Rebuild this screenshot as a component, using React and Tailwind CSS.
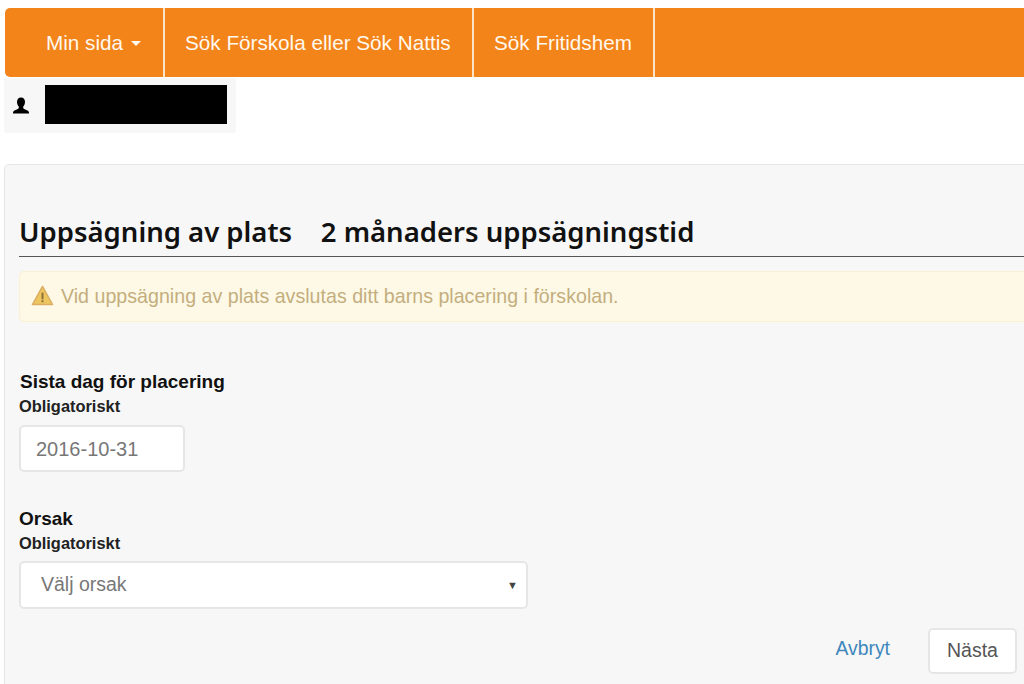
function NavItem({ children, className = "" }) {
  return (
    <a className={"flex h-full items-center border-r-2 border-[#fbe3c8] text-[20.7px] text-[#fff8ee] " + className}>
      {children}
    </a>
  );
}

function FieldLabel({ title, className = "" }) {
  return (
    <div>
      <div className={"h-[24px] text-[19px] font-bold leading-[24px] text-[#111] " + className}>{title}</div>
      <div className="h-[24px] text-[16.4px] font-bold leading-[24px] text-[#222]">Obligatoriskt</div>
    </div>
  );
}

export default function App() {
  return (
    <div className="h-[684px] w-[1024px] overflow-hidden bg-white font-['Liberation_Sans',sans-serif]">
      {/* top nav */}
      <nav className="ml-[5px] mt-[8px] flex h-[69px] w-[1100px] rounded-l-[5px] bg-[#f2841a]">
        <NavItem className="w-[160px] pl-[41px]">
          Min sida
          <span className="ml-[8px] mt-[2px] h-0 w-0 border-x-[5px] border-t-[5px] border-x-transparent border-t-[#fff8ee]" />
        </NavItem>
        <NavItem className="w-[309px] pl-[20px]">Sök Förskola eller Sök Nattis</NavItem>
        <NavItem className="w-[181px] pl-[20px]">Sök Fritidshem</NavItem>
      </nav>

      {/* user */}
      <div className="ml-[4px] mt-[1px] flex h-[55px] w-[232px] items-center rounded-b-[3px] bg-[#f7f7f7]">
        <svg viewBox="0 0 20 20" className="ml-[7px] h-[20px] w-[20px] text-black" fill="currentColor">
          <path d="M10 1.5c-2.6 0-4 2-4 4.6 0 1.8.7 3.5 1.8 4.5v1.2c0 .8-.9 1.2-2.6 1.9-1.6.6-3 1.2-3.2 2.8v1h16v-1c-.2-1.6-1.6-2.2-3.2-2.8-1.7-.7-2.6-1.1-2.6-1.9v-1.2c1.1-1 1.8-2.7 1.8-4.5 0-2.6-1.4-4.6-4-4.6z" />
        </svg>
        <div className="ml-[14px] mb-[3px] h-[39px] w-[182px] bg-black" />
      </div>

      {/* panel */}
      <main className="ml-[4px] mt-[31px] h-[540px] w-[1100px] rounded-tl-[5px] border border-[#e6e6e6] bg-[#f7f7f7] pl-[14px] pt-[47px]">
        <h1 className="h-[45px] w-[1100px] whitespace-pre border-b border-[#555] text-[27.5px] font-semibold leading-[40px] text-[#111] font-['Noto_Sans',sans-serif]">
          Uppsägning av plats    2 månaders uppsägningstid
        </h1>

        <div className="mt-[14px] flex h-[51px] w-[1100px] items-center rounded-[5px] border border-[#faf0d2] bg-[#fdf9e6] pl-[11px] text-[19.65px] text-[#c4ae7e]">
          <svg viewBox="0 0 24 22" className="mb-[2px] h-[21px] w-[23px]">
            <path d="M12 1.5 1.5 20.5h21z" fill="#ecc65f" stroke="#dcae62" strokeWidth="1.6" strokeLinejoin="round" />
            <rect x="11" y="8" width="2" height="7" fill="#8a6d3b" />
            <rect x="11" y="16" width="2" height="2" fill="#8a6d3b" />
          </svg>
          <span className="ml-[7px]">Vid uppsägning av plats avslutas ditt barns placering i förskolan.</span>
        </div>

        <div className="mt-[48px]">
          <FieldLabel title="Sista dag för placering" className="pl-px" />
          <div className="mt-[7px] flex h-[47px] w-[166px] items-center rounded-[5px] border-2 border-[#e6e6e6] bg-white pl-[15px] text-[20px] text-[#777]">
            2016-10-31
          </div>
        </div>

        <div className="mt-[35px]">
          <FieldLabel title="Orsak" />
          <div className="mt-[6px] flex h-[48px] w-[509px] items-center justify-between rounded-[5px] border-2 border-[#e6e6e6] bg-white pl-[20px] pr-[8px] text-[19.5px] text-[#777]">
            Välj orsak
            <span className="text-[11px] text-[#444]">▼</span>
          </div>
        </div>

        <div className="mt-[19px] flex w-[998px] items-center justify-end">
          <a className="mb-[4px] text-[19.4px] text-[#3f87bd]">Avbryt</a>
          <button className="ml-[38px] h-[46px] w-[89px] rounded-[5px] border-2 border-[#e6e6e6] bg-white text-[19.5px] text-[#555]">
            Nästa
          </button>
        </div>
      </main>
    </div>
  );
}
